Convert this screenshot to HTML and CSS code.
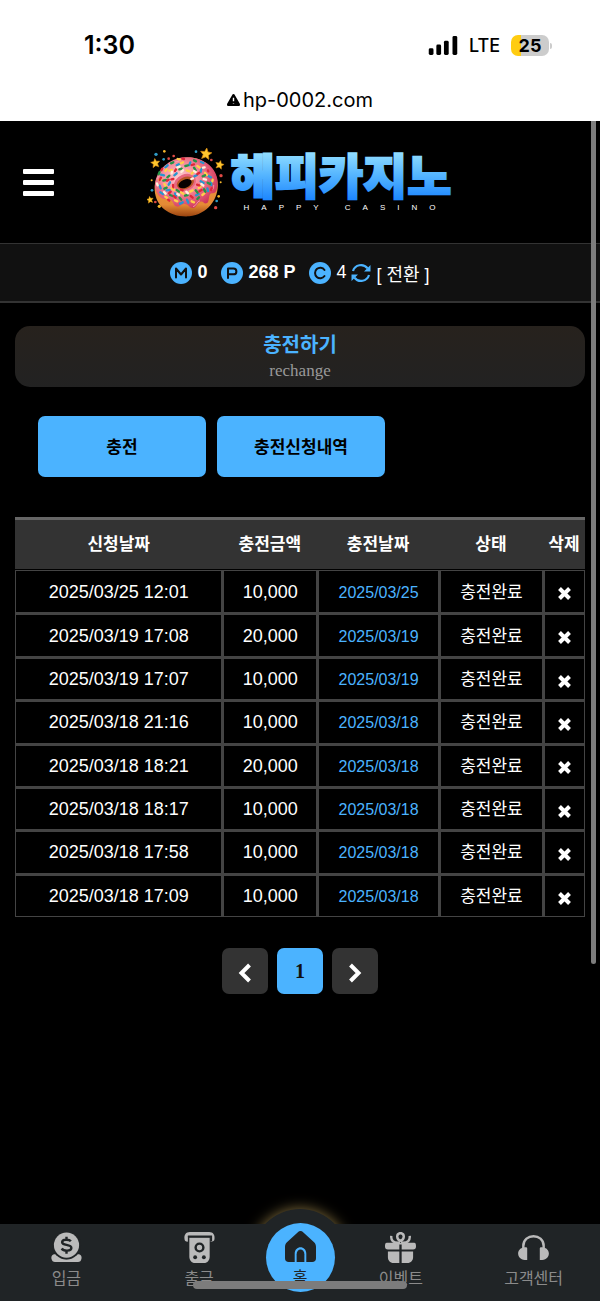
FILE: index.html
```html
<!DOCTYPE html>
<html lang="ko">
  <head>
    <meta charset="UTF-8">
    <meta name="viewport" content="width=device-width">
    <title>충전하기</title>
    <link rel="stylesheet" href="styles.css">
  </head>
  <body>
    <div class="device">
      <div class="status">
        <span class="time">1:30</span>
        <div class="status-icons">
          <svg class="signal" viewBox="0 0 30 20" aria-hidden="true">
            <rect x="0" y="13" width="5" height="7" rx="1.5"/>
            <rect x="8" y="9" width="5" height="11" rx="1.5"/>
            <rect x="16" y="5" width="5" height="15" rx="1.5"/>
            <rect x="25" y="0" width="5" height="20" rx="1.5"/>
          </svg>
          <span class="network">LTE</span>
          <span class="battery">25</span>
        </div>
      </div>
      <div class="address">
        <svg class="warning" viewBox="0 0 13 12" aria-hidden="true">
          <path d="M6.5 0C7.200 0 7.500.4 7.800 1l4.900 8.600c.7 1.300.1 2.400-1.200 2.400h-10C.2 12-.4 10.900.3 9.600L5.200 1C5.500.4 5.800 0 6.500 0z"/>
          <path class="mark" d="M6.500 3.800v3.400M6.500 9v.6"/>
        </svg>
        <span>hp-0002.com</span>
      </div>
    </div>

    <div class="page">
      <header class="header">
        <button type="button" class="menu" aria-label="메뉴"><i></i><i></i><i></i></button>
        <a href="#" class="logo">
          <svg class="donut" viewBox="24 18 240 216" aria-hidden="true">
            <defs>
              <linearGradient id="dough" x1="0" y1="0" x2="0" y2="1">
                <stop offset=".5" stop-color="#e8923a"/>
                <stop offset=".8" stop-color="#e58a35"/>
                <stop offset="1" stop-color="#9a4410"/>
              </linearGradient>
              <radialGradient id="icing" cx=".4" cy=".4" r=".65">
                <stop offset="0" stop-color="#ffd0d2"/>
                <stop offset=".45" stop-color="#f78c9c"/>
                <stop offset="1" stop-color="#cf3358"/>
              </radialGradient>
              <path id="star" d="M0-17 5-6 17-5 8 4 11 16 0 10-11 16-8 4-17-5-5-6z"/>
            </defs>
            <path fill="url(#dough)" d="M140 53c48-5 91 29 96 74 5 51-32 97-85 102-57 4-101-28-104-79-2-49 39-93 93-97z"/>
            <path fill="url(#icing)" d="M137 52c49-4 92 26 98 65 2 17-1 34-6 40-6 6-12-1-17 8-4 9-1 23-10 25-8 2-9-8-18-5-9 3-11 17-22 19-11 1-13-12-25-12-12 0-15 12-26 7-9-4-6-14-16-20-8-6-19 3-31-8-11-10-18-26-16-39 5-43 44-77 89-80z"/>
            <path fill="none" stroke="#ffb0bc" stroke-width="3" opacity=".7" d="M55 116c10-28 38-48 66-53M224 135c1 10-3 16-9 18M183 182c-10 2-11 17-21 18"/>
            <ellipse cx="138" cy="128" rx="34" ry="25" fill="#e8677f" transform="rotate(-22 138 128)"/>
            <ellipse cx="139" cy="129" rx="27" ry="18" fill="#b95724" transform="rotate(-22 139 129)"/>
            <ellipse cx="138" cy="131" rx="21" ry="12" fill="#080201" transform="rotate(-22 138 131)"/>
            <g fill="none" stroke-width="7" stroke-linecap="round">
              <path stroke="#2896cf" d="M86 76l-7 6M113 76l8-4M154 67l-3 8M187 87l-2 9M208 108l8 4M75 106l-9-2M113 100l-7 6M166 109l8-4M185 124l9 5M205 145l2 8M62 137l3 8M83 151l9-1M108 160l3 8M144 179l4 9M171 166l8-4M93 127l-4 7M64 157l8 5M193 69l-7-3M131 187l-8 4M216 127l1 8"/>
              <path stroke="#ffd04a" d="M132 67l-7 3M99 90l-8 2M143 91l8 3M175 78l7 5M198 98l6 7M221 119l-1 5M60 120l7-3M76 132l5 7M98 145l7 5M126 157l8 5M153 155l8-4M179 144l6-4M190 165l6-5M108 181l7 3M79 170l6 4M158 184l7 3M158 101l5-5M116 57l7 2M79 93l4-5"/>
              <path stroke="#269447" d="M103 67l-7 3M139 78l8-2M165 83l5 8M191 109l7-3M206 128l7 4M62 96l-3 7M91 107l-6 5M73 122l8-2M83 143l-7 3M113 150l7 5M138 167l8-2M170 151l6 7M195 148l4 7M93 165l8 3M122 173l5 6M175 177l5-5M121 88l7-2M165 61l6 3"/>
              <path stroke="#df2739" d="M70 86l-3 5M111 88l-3 5M158 75l7-2M181 98l-6 4M207 91l1 3M218 145l-2 6M103 117l-6 1M66 113l-4 7M89 119l-5 3M102 135l1 7M95 155l-5 5M131 151l-5-2M155 168l6 5M181 154l7-4M174 134l7 2M110 173l-6-5M130 56l5 1M87 179l4 3"/>
              <path stroke="#fff0dc" d="M122 80l-7 2M132 91l-5 5M170 96l-5-3M197 82l-5 1M201 119l-7-2M54 130l2 6M80 161l-5-5M120 165l-5-3M147 160l-5-5M193 137l-6-5M157 117l5-2M98 100l1-5"/>
            </g>
            <g fill="#ffc72e" stroke="#d88a10" stroke-width="2">
              <use href="#star" transform="translate(201 41) rotate(8)"/>
              <use href="#star" transform="translate(49 69) scale(.8) rotate(-8)"/>
              <use href="#star" transform="translate(242 74) scale(.75) rotate(14)"/>
              <use href="#star" transform="translate(33 179) scale(.6) rotate(-10)"/>
            </g>
            <g fill="#f4b52b">
              <circle cx="76" cy="34" r="4"/><circle cx="239" cy="169" r="4"/><circle cx="61" cy="199" r="5"/><circle cx="245" cy="127" r="3"/><circle cx="38" cy="121" r="3"/>
            </g>
            <g fill="#2f9cc7">
              <circle cx="51" cy="43" r="5"/><circle cx="171" cy="35" r="4"/><circle cx="233" cy="183" r="4"/><circle cx="39" cy="151" r="4"/><circle cx="74" cy="58" r="4"/>
            </g>
            <g fill="#e14a45">
              <circle cx="89" cy="56" r="4"/><circle cx="104" cy="48" r="4"/><circle cx="246" cy="107" r="5"/><circle cx="230" cy="203" r="5"/><circle cx="49" cy="186" r="4"/><circle cx="217" cy="60" r="4"/>
            </g>
          </svg>
          <span class="brand">
            <svg class="wordmark" viewBox="0 0 226 50">
              <defs>
                <linearGradient id="sky" gradientUnits="userSpaceOnUse" x1="0" y1="0" x2="0" y2="48">
                  <stop offset=".05" stop-color="#8fdcff"/>
                  <stop offset=".5" stop-color="#55b5ff"/>
                  <stop offset="1" stop-color="#1f88ff"/>
                </linearGradient>
              </defs>
              <text class="letters" x="114" y="43" text-anchor="middle">해피카지노</text>
            </svg>
            <small>HAPPY CASINO</small>
          </span>
        </a>
      </header>

      <div class="balance">
        <svg class="coin" viewBox="0 0 22 22" role="img" aria-label="머니"><circle cx="11" cy="11" r="11"/><path d="M6 15.500v-9l5 6 5-6v9"/></svg>
        <b>0</b>
        <svg class="coin point" viewBox="0 0 22 22" role="img" aria-label="포인트"><circle cx="11" cy="11" r="11"/><path d="M7 16V6.500h5.500a2.900 2.900 0 0 1 0 5.800H7"/></svg>
        <b>268 P</b>
        <svg class="coin point" viewBox="0 0 22 22" role="img" aria-label="콤프"><circle cx="11" cy="11" r="11"/><path d="M15.500 8a5.200 5.200 0 1 0 0 6"/></svg>
        <span>4</span>
        <svg class="refresh" viewBox="0 0 20 20" aria-hidden="true">
          <path d="M2 8a8.300 8.300 0 0 1 14.500-2.700M18 12A8.300 8.300 0 0 1 3.500 14.700"/>
          <path class="head" d="M19.500 2v6.500H13zM.5 18v-6.500H7z"/>
        </svg>
        <a href="#">[ 전환 ]</a>
      </div>

      <main class="content">
        <div class="title">
          <h1>충전하기</h1>
          <p>rechange</p>
        </div>

        <div class="tabs">
          <button type="button">충전</button>
          <button type="button">충전신청내역</button>
        </div>

        <svg class="sprite" aria-hidden="true">
          <symbol id="cross" viewBox="0 0 13 13"><path d="M1.500 1.500l10 10M11.500 1.500l-10 10"/></symbol>
        </svg>
        <table class="history">
          <colgroup>
            <col class="col-applied"><col class="col-amount"><col class="col-date"><col class="col-state"><col class="col-delete">
          </colgroup>
          <thead>
            <tr><th>신청날짜</th><th>충전금액</th><th>충전날짜</th><th>상태</th><th>삭제</th></tr>
          </thead>
          <tbody>
            <tr>
              <td>2025/03/25 12:01</td><td>10,000</td><td class="date">2025/03/25</td><td class="state">충전완료</td>
              <td><button type="button" aria-label="삭제"><svg><use href="#cross"/></svg></button></td>
            </tr>
            <tr>
              <td>2025/03/19 17:08</td><td>20,000</td><td class="date">2025/03/19</td><td class="state">충전완료</td>
              <td><button type="button" aria-label="삭제"><svg><use href="#cross"/></svg></button></td>
            </tr>
            <tr>
              <td>2025/03/19 17:07</td><td>10,000</td><td class="date">2025/03/19</td><td class="state">충전완료</td>
              <td><button type="button" aria-label="삭제"><svg><use href="#cross"/></svg></button></td>
            </tr>
            <tr>
              <td>2025/03/18 21:16</td><td>10,000</td><td class="date">2025/03/18</td><td class="state">충전완료</td>
              <td><button type="button" aria-label="삭제"><svg><use href="#cross"/></svg></button></td>
            </tr>
            <tr>
              <td>2025/03/18 18:21</td><td>20,000</td><td class="date">2025/03/18</td><td class="state">충전완료</td>
              <td><button type="button" aria-label="삭제"><svg><use href="#cross"/></svg></button></td>
            </tr>
            <tr>
              <td>2025/03/18 18:17</td><td>10,000</td><td class="date">2025/03/18</td><td class="state">충전완료</td>
              <td><button type="button" aria-label="삭제"><svg><use href="#cross"/></svg></button></td>
            </tr>
            <tr>
              <td>2025/03/18 17:58</td><td>10,000</td><td class="date">2025/03/18</td><td class="state">충전완료</td>
              <td><button type="button" aria-label="삭제"><svg><use href="#cross"/></svg></button></td>
            </tr>
            <tr>
              <td>2025/03/18 17:09</td><td>10,000</td><td class="date">2025/03/18</td><td class="state">충전완료</td>
              <td><button type="button" aria-label="삭제"><svg><use href="#cross"/></svg></button></td>
            </tr>
          </tbody>
        </table>

        <nav class="pager" aria-label="페이지">
          <a href="#" aria-label="이전"><svg viewBox="0 0 14 20"><path d="M11.500 2 3.500 10l8 8"/></svg></a>
          <a href="#" class="current">1</a>
          <a href="#" aria-label="다음"><svg viewBox="0 0 14 20"><path d="M2.500 2 10.500 10l-8 8"/></svg></a>
        </nav>
      </main>
      <div class="scrollbar"></div>
    </div>

    <nav class="bottom">
      <span class="halo"></span>
      <div class="bottom-bar">
        <a href="#">
          <svg viewBox="0 0 32 32" aria-hidden="true">
            <path d="M3 23h3c5 7 15 7 20 0h3c3 1 3 4 2 6-.5 1.500-1.500 2-3 2H4c-1.500 0-2.500-.5-3-2-1-2-1-5 2-6z"/>
            <circle class="gap" cx="16" cy="13.500" r="15"/>
            <circle cx="16" cy="13.500" r="13"/>
            <path class="cut" d="M20.500 9.500C19 7.500 11.500 7 11.500 10.500c0 4 9.500 1.500 9.500 6 0 3.500-8 3.500-10 .5M16 5v3M16 19v3.500"/>
          </svg>
          <span>입금</span>
        </a>
        <a href="#">
          <svg viewBox="0 0 32 32" aria-hidden="true">
            <path d="M6 0h20c4 0 6 3 5.500 7 0 2.500-1.500 3-4 3V4H4v6C1.500 10 .5 9 .5 7 0 3 2 0 6 0z"/>
            <path d="M5.500 6h21v19c0 4-2 7-6 7h-9c-4 0-6-3-6-7z"/>
            <path class="trim" d="M4 4.500h24v5"/>
            <circle class="cut" cx="16" cy="16" r="4"/>
            <circle class="gap" cx="11.500" cy="26" r="2"/><circle class="gap" cx="20.500" cy="26" r="2"/>
          </svg>
          <span>출금</span>
        </a>
        <a href="#" class="home">
          <svg viewBox="0 0 32 32" aria-hidden="true">
            <path d="M13 1.500c2-2 4-2 6 0l11 10c1.500 1.500 2 3 2 5V28c0 2.500-1.500 4-4 4h-6V23.500c0-9-12-9-12 0V32H4c-2.500 0-4-1.500-4-4V16.500c0-2 .5-3.500 2-5z"/>
            <path d="M12 32v-8c0-6.500 8-6.500 8 0v8z"/>
          </svg>
          <span>홈</span>
        </a>
        <a href="#">
          <svg viewBox="0 0 32 32" aria-hidden="true">
            <path d="M2 11h28c2 0 2 2 2 4 0 2-1 3-3 3H17.200v-5h-2.400v5H3c-2 0-3-1-3-3 0-2 0-4 2-4z"/>
            <path d="M3 20h11.800v12H9c-4 0-6-3-6-6zM17.200 20H29v6c0 3-2 6-6 6h-5.800z"/>
            <path class="line" d="M15.500 11C8 12 6 8 6.500 4M16.500 11C24 12 26 8 25.500 4M16 9c-4-1-5-7 0-8 5 1 4 7 0 8z"/>
          </svg>
          <span>이벤트</span>
        </a>
        <a href="#">
          <svg viewBox="0 0 32 32" aria-hidden="true">
            <path class="line" d="M5.500 18v-3.500c0-13.500 21-13.500 21 0V18"/>
            <path d="M9.500 17v12H7c-9-1-9-12-1-13 2-.3 3.500-.3 3.500 1zM22.500 17v12H25c9-1 9-12 1-13-2-.3-3.500-.3-3.500 1z"/>
          </svg>
          <span>고객센터</span>
        </a>
      </div>
      <span class="home-indicator"></span>
    </nav>
  </body>
</html>
```
FILE: styles.css
```css
* {
  box-sizing: border-box;
}
body {
  display: flex;
  flex-direction: column;
  min-height: 100vh;
  margin: 0;
  background: #000;
  color: #fff;
  font-family: "Liberation Sans", "Noto Sans CJK KR", sans-serif;
  font-size: 18px;
}
a {
  color: inherit;
  text-decoration: none;
}
button {
  border: 0;
  font-family: inherit;
  cursor: pointer;
}

/* status bar */
.device {
  height: 121px;
  padding-top: 28px;
  background: #fff;
  color: #000;
  font-family: Inter, sans-serif;
}
.status {
  display: flex;
  align-items: center;
  justify-content: space-between;
  height: 34px;
  padding: 0 48px 0 84px;
}
.time {
  font-size: 25px;
  font-weight: 600;
}
.status-icons {
  display: flex;
  align-items: center;
}
.signal {
  width: 30px;
  height: 19px;
}
.network {
  margin: 0 11px;
  font-size: 18px;
  font-weight: 500;
}
.battery {
  position: relative;
  width: 38px;
  margin-right: 3px;
  border-radius: 7px;
  background: linear-gradient(90deg, #fc1 10px, #ccc 10px);
  font-size: 18px;
  font-weight: 700;
  line-height: 21px;
  text-align: center;
}
.battery::after {
  position: absolute;
  top: 8px;
  right: -3px;
  width: 2px;
  height: 6px;
  border-radius: 0 2px 2px 0;
  background: #ccc;
  content: "";
}
.address {
  display: flex;
  align-items: center;
  justify-content: center;
  gap: 3px;
  height: 34px;
  margin-top: 21px;
  font-size: 20px;
}
.warning {
  width: 13px;
  height: 12px;
}
.warning .mark {
  fill: none;
  stroke: #fff;
  stroke-width: 1.4;
}

/* header */
.page {
  position: relative;
  flex: 1;
}
.header {
  display: grid;
  grid-template-columns: 1fr auto 1fr;
  align-items: center;
  height: 122px;
  padding: 0 23px;
}
.menu {
  display: flex;
  flex-direction: column;
  gap: 6px;
  width: 31px;
  padding: 0;
  background: none;
}
.menu i {
  width: 100%;
  height: 5px;
  background: #fff;
  border-radius: 1px;
}
.logo {
  display: flex;
  align-items: center;
}
.donut {
  width: 80px;
  height: 72px;
}
.brand {
  display: flex;
  flex-direction: column;
  align-items: center;
}
.wordmark {
  width: 226px;
  height: 50px;
  overflow: visible;
}
.letters {
  fill: url(#sky);
  stroke: url(#sky);
  stroke-width: 2;
  font-family: "Noto Sans CJK KR", sans-serif;
  font-size: 48px;
  font-weight: 900;
}
.brand small {
  padding: 2px 0 0 11px;
  font-size: 8px;
  letter-spacing: 12px;
  line-height: 10px;
}

/* balance */
.balance {
  display: flex;
  align-items: center;
  justify-content: center;
  gap: 5px;
  height: 60px;
  border-top: 1px solid #333;
  border-bottom: 2px solid #333;
  background: #111;
}
.coin {
  width: 22px;
  height: 22px;
  fill: #4bb3ff;
}
.coin path {
  fill: none;
  stroke: #111;
  stroke-width: 2;
  stroke-linecap: round;
  stroke-linejoin: round;
}
.point {
  margin-left: 9px;
}
.refresh {
  width: 20px;
  height: 20px;
}
.refresh path {
  fill: none;
  stroke: #4bb3ff;
  stroke-width: 2.2;
}
.refresh .head {
  fill: #4bb3ff;
  stroke: none;
}

/* content */
.content {
  padding: 23px 15px;
}
.title {
  padding: 5px 0;
  border-radius: 15px;
  background: linear-gradient(#27221d, #222);
  text-align: center;
}
.title h1 {
  margin: 0;
  color: #4bb3ff;
  font-size: 20px;
  line-height: 28px;
}
.title p {
  margin: 0;
  color: #999;
  font-family: "Liberation Serif", serif;
  font-size: 17px;
  line-height: 23px;
}
.tabs {
  display: flex;
  gap: 11px;
  padding: 29px 23px 40px;
}
.tabs button {
  width: 168px;
  height: 61px;
  padding-bottom: 4px;
  border-radius: 7px;
  background: #4bb3ff;
  color: #000;
  font-size: 17px;
  font-weight: 700;
}

.sprite {
  display: none;
}
.history {
  width: 100%;
  height: 400px;
  border-spacing: 0;
  table-layout: fixed;
  text-align: center;
}
.col-applied {
  width: 36.4%;
}
.col-amount {
  width: 16.6%;
}
.col-date {
  width: 21.4%;
}
.col-state {
  width: 18.2%;
}
.col-delete {
  width: 7.4%;
}
.history th {
  height: 53px;
  padding: 0 0 4px;
  border-top: 3px solid #666;
  border-bottom: 1px solid #000;
  background: #333;
  font-size: 17px;
}
.history td {
  height: 43px;
  padding: 0;
  border: 1px solid #444;
  line-height: 24px;
}
.history td + td {
  border-left-width: 2px;
}
.history tr + tr td {
  border-top-width: 2px;
}
.history .date {
  padding-top: 2px;
  color: #4bb3ff;
  font-size: 16px;
}
.history .state {
  padding-top: 2px;
  font-size: 17px;
}
.history button {
  padding: 2px 0 0;
  background: none;
  vertical-align: middle;
}
.history svg {
  display: block;
  width: 13px;
  height: 13px;
  fill: none;
  stroke: #fff;
  stroke-width: 4;
}

.pager {
  display: flex;
  justify-content: center;
  gap: 9px;
  padding-top: 31px;
}
.pager a {
  display: flex;
  align-items: center;
  justify-content: center;
  width: 46px;
  height: 46px;
  border-radius: 7px;
  background: #333;
}
.pager svg {
  width: 14px;
  height: 20px;
  margin-top: 4px;
  fill: none;
  stroke: #fff;
  stroke-width: 4;
}
.pager .current {
  background: #4bb3ff;
  color: #111;
  font-family: "Liberation Serif", serif;
  font-size: 20px;
  font-weight: 700;
}
.scrollbar {
  position: absolute;
  top: 0;
  right: 4px;
  width: 5px;
  height: 843px;
  border-radius: 0 0 3px 3px;
  background: #7d7d7d;
}

/* bottom menu */
.bottom {
  position: relative;
}
.halo {
  position: absolute;
  top: -15px;
  left: calc(50% - 48px);
  width: 96px;
  height: 96px;
  border-radius: 50%;
  background: #202426;
  box-shadow: 0 0 14px #85713f;
}
.bottom-bar {
  position: relative;
  display: flex;
  height: 77px;
  background: #202426;
}
.bottom-bar a {
  display: flex;
  flex: 1;
  flex-direction: column;
  align-items: center;
  padding-top: 8px;
  color: #8b8b8b;
  font-size: 16px;
  line-height: 20px;
}
.bottom-bar svg {
  width: 31px;
  height: 31px;
  margin-bottom: 6px;
  fill: #bababa;
}
.bottom-bar .gap {
  fill: #202426;
}
.bottom-bar .cut {
  fill: none;
  stroke: #202426;
  stroke-width: 2.5;
}
.bottom-bar .trim {
  fill: none;
  stroke: #202426;
  stroke-width: 2;
}
.bottom-bar .line {
  fill: none;
  stroke: #bababa;
  stroke-width: 2.5;
}
.bottom-bar .home {
  flex: 0 0 69px;
  height: 69px;
  margin-top: -1px;
  border-radius: 50%;
  background: #4bb3ff;
  color: #202426;
}
.bottom-bar .home svg {
  fill: #202426;
}
.home-indicator {
  position: absolute;
  bottom: 12px;
  left: calc(50% - 107px);
  width: 214px;
  height: 8px;
  border-radius: 4px;
  background: #7c7c7c;
}
```
